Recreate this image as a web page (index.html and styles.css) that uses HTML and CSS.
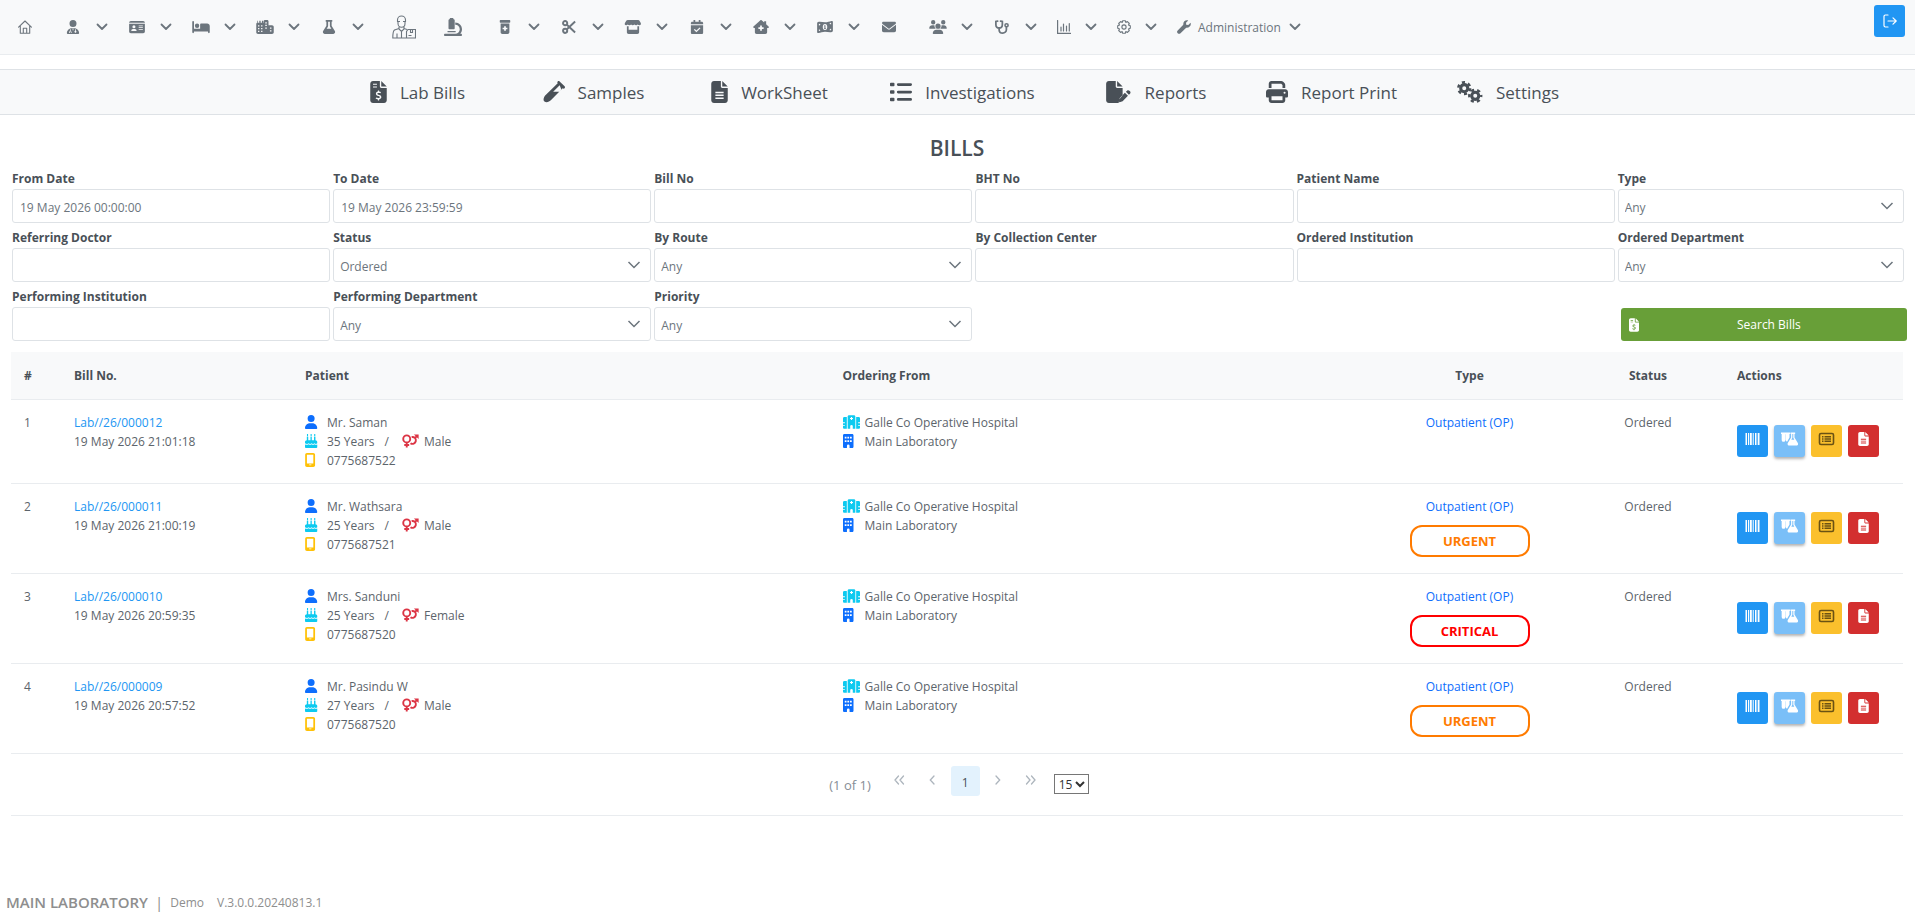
FILE: index.html
```html
<!DOCTYPE html>
<html lang="en">
<head>
    <meta charset="UTF-8">
    <meta name="viewport" content="width=device-width, initial-scale=1.0">
    <title>Bills</title>
    <link rel="stylesheet" href="styles.css">
</head>
<body>
    <!-- Icon sprite -->
    <svg class="sprite" aria-hidden="true">
        <symbol id="i-down" viewBox="0 0 14 14"><path d="M2.500 4.500 7 9l4.500-4.500" fill="none" stroke="currentColor" stroke-width="1.800" stroke-linecap="round" stroke-linejoin="round"/></symbol>
        <symbol id="i-home" viewBox="0 0 14 14"><path d="M.6 7.200 7 1l6.400 6.200M2.300 6v7.300h9.400V6M5.300 13V8.200h3.400V13" fill="none" stroke="currentColor" stroke-width="1.100" stroke-linecap="round" stroke-linejoin="round"/></symbol>
        <symbol id="i-doctor" viewBox="0 0 448 512"><path fill-rule="evenodd" d="M224 256A128 128 0 1 0 224 0a128 128 0 1 0 0 256zM178 304C80 304 0 384 0 482c0 16 13 30 30 30h388c17 0 30-14 30-30 0-98-80-178-178-178zM112 340h28v60c18 6 32 22 32 42v30h-28v-30c0-24-36-24-36 0v30H80v-30c0-20 14-36 32-42zM300 340h28v56a36 36 0 1 1-28 0zM205 320h38l-10 60h-18z"/></symbol>
        <symbol id="i-card" viewBox="0 0 576 512"><path fill-rule="evenodd" d="M0 96c0-35 29-64 64-64h448c35 0 64 29 64 64v8H0zM0 136h576v280c0 35-29 64-64 64H64c-35 0-64-29-64-64zM176 304a56 56 0 1 0 0-112 56 56 0 1 0 0 112zM140 328c-40 0-60 28-60 64 0 8 6 14 14 14h164c8 0 14-6 14-14 0-36-22-64-60-64zM350 200h152v30H350zM350 264h152v30H350zM350 328h152v30H350z"/></symbol>
        <symbol id="i-bed" viewBox="0 0 640 512"><path d="M32 32c17.700 0 32 14.300 32 32V320H288V160c0-17.700 14.300-32 32-32H544c53 0 96 43 96 96V448c0 17.700-14.300 32-32 32s-32-14.300-32-32V416H64v32c0 17.700-14.300 32-32 32s-32-14.300-32-32V64C0 46.300 14.300 32 32 32zm144 96a80 80 0 1 1 0 160 80 80 0 1 1 0-160z"/></symbol>
        <symbol id="i-city" viewBox="0 0 640 512"><path fill-rule="evenodd" d="M64 24v72h48V24h48v72h48V24h48v72h16V48c0-26 22-48 48-48h80c26 0 48 22 48 48v144h128c35 0 64 29 64 64v192c0 35-29 64-64 64H64c-35 0-64-29-64-64V144c0-26 16-48 40-48V24zM64 190h50v46H64zM64 290h50v46H64zM64 390h50v46H64zM176 190h50v46h-50zM176 290h50v46h-50zM176 390h50v46h-50zM330 80h56v46h-56zM330 176h56v46h-56zM330 276h56v46h-56zM500 276h56v46h-56zM500 376h56v46h-56z"/></symbol>
        <symbol id="i-flask" viewBox="0 0 448 512"><path d="M288 0H128C110.300 0 96 14.300 96 32s14.300 32 32 32V196.800c0 11.800-3.300 23.500-9.500 33.500L10.300 406.200C3.600 417.200 0 429.700 0 442.600C0 480.900 31.100 512 69.400 512H378.600c38.300 0 69.400-31.100 69.400-69.400c0-12.800-3.600-25.400-10.300-36.400L329.500 230.400c-6.200-10.100-9.500-21.700-9.500-33.500V64c17.700 0 32-14.300 32-32s-14.300-32-32-32H288zM192 196.800V64h64V196.800c0 23.700 6.600 46.900 19 67.100L309.500 320h-171L173 263.900c12.400-20.200 19-43.400 19-67.100z"/></symbol>
        <symbol id="i-staff" viewBox="0 0 24 24"><g fill="none" stroke="currentColor" stroke-width="1.100"><path d="M5.500 7V5a4 4 0 0 1 8 0v2M6 6.500v2c0 5 7 5 7 0v-2M5 6.500h3M11 6.500h3M7 12v2l2.500 2.500L12 14v-2M7 13.500l-4.500 1.500C1 16 .8 18 .8 23H14M12 13.500l3 1M5 18.500V23M9.500 17v6M16 14.500h7.500V23H14.500v-6.500zM18.500 14.500v3h2v-3M16.500 20.500h3"/></g></symbol>
        <symbol id="i-scope" viewBox="0 0 512 512"><path d="M160 32c0-18 14-32 32-32h48c18 0 32 14 32 32 18 0 32 14 32 32v224c0 18-14 32-32 32H160c-18 0-32-14-32-32V64c0-18 14-32 32-32zM32 448h288c71 0 128-57 128-128S391 192 320 192v-64c106 0 192 86 192 192 0 49-18 94-49 128h17c18 0 32 14 32 32s-14 32-32 32H32c-18 0-32-14-32-32s14-32 32-32zM112 368h208c9 0 16 7 16 16s-7 24-16 24H112c-9 0-16-15-16-24s7-16 16-16z"/></symbol>
        <symbol id="i-jar" viewBox="0 0 384 512"><path fill-rule="evenodd" d="M0 24C0 11 11 0 24 0h336c13 0 24 11 24 24v48c0 13-11 24-24 24H24C11 96 0 85 0 72zM32 128h320v320c0 35-29 64-64 64H96c-35 0-64-29-64-64zM160 224v56h-56v60h56v56h64v-56h56v-60h-56v-56z"/></symbol>
        <symbol id="i-cut" viewBox="0 0 16 16"><g fill="none" stroke="currentColor" stroke-width="2.200"><circle cx="3.600" cy="3.600" r="2.400"/><circle cx="3.600" cy="12.400" r="2.400"/><path d="M5.300 5.200 15 14.200M5.300 10.800 15 1.800"/></g></symbol>
        <symbol id="i-shop" viewBox="0 0 576 512"><path fill-rule="evenodd" d="M92 0h392c14 0 26 7 34 18l50 82c28 46 2 92-46 92-26 0-48-12-62-30-14 18-36 30-60 30s-48-12-62-30c-14 18-36 30-60 30s-46-12-60-30c-14 18-36 30-62 30s-46-12-60-30c-14 18-34 30-60 30-48 0-66-46-38-92l50-82C66 7 78 0 92 0zM64 224h64v128h320V224h64v224c0 35-29 64-64 64H128c-35 0-64-29-64-64z"/></symbol>
        <symbol id="i-cal" viewBox="0 0 448 512"><path fill-rule="evenodd" d="M96 0h64v64h128V0h64v64h48c26 0 48 22 48 48v40H0v-40c0-26 22-48 48-48h48zM0 192h448v272c0 26-22 48-48 48H48c-26 0-48-22-48-48zM318 270 202 384l-60-58-34 34 94 92 150-148z"/></symbol>
        <symbol id="i-house" viewBox="0 0 576 512"><path fill-rule="evenodd" d="M267 8c12-11 30-11 42 0l95 84V48h72v108l88 78c23 22 14 54-18 54h-34v160c0 35-29 64-64 64H128c-35 0-64-29-64-64V288H32c-32 0-42-32-20-54zM256 200v64h-64v64h64v64h64v-64h64v-64h-64v-64z"/></symbol>
        <symbol id="i-money" viewBox="0 0 576 512"><path fill-rule="evenodd" d="M0 120c0-22 10-38 32-44 90-26 170 10 256 10S450 50 530 36c26-4 46 12 46 36v320c0 22-12 38-34 44-90 24-168-8-254-8s-162 34-242 48C20 480 0 464 0 440zM288 144a82 112 0 1 0 0 224 82 112 0 1 0 0-224zM265 196h40v104h16v30h-66v-30h12v-70h-14zM64 140v60c32 0 56-26 56-58zM64 404v-60c32 0 50 18 50 50zM512 100v60c-30 0-56-20-56-52zM512 376v-56c-30 0-56 26-56 56z"/></symbol>
        <symbol id="i-mail" viewBox="0 0 512 512"><path d="M48 64C21.500 64 0 85.500 0 112c0 15.100 7.100 29.300 19.200 38.400L236.800 313.600c11.400 8.500 27 8.500 38.400 0L492.800 150.400c12.100-9.100 19.200-23.300 19.200-38.400c0-26.500-21.500-48-48-48H48zM0 176V384c0 35.300 28.700 64 64 64H448c35.300 0 64-28.700 64-64V176L294.400 339.200c-22.800 17.100-54 17.100-76.800 0L0 176z"/></symbol>
        <symbol id="i-users" viewBox="0 0 640 512"><path d="M144 0a80 80 0 1 1 0 160A80 80 0 1 1 144 0zM512 0a80 80 0 1 1 0 160A80 80 0 1 1 512 0zM0 298c0-58 48-106 107-106h42c16 0 31 4 45 10-8 50 12 90 42 118H21c-12 0-21-10-21-22zM404 320c30-28 50-68 42-118 14-6 29-10 45-10h42c59 0 107 48 107 106 0 12-9 22-21 22zM320 128a96 96 0 1 1 0 192 96 96 0 1 1 0-192zM128 485c0-74 60-133 133-133h118c73 0 133 59 133 133 0 15-12 27-27 27H155c-15 0-27-12-27-27z"/></symbol>
        <symbol id="i-steth" viewBox="0 0 18 16"><path d="M4 1.200 2 1.700V5c0 5.500 7.400 5.500 7.400 0V1.700L7.400 1.200M5.700 9v2c0 5.200 8.300 5.200 8.300 0V8" fill="none" stroke="currentColor" stroke-width="2" stroke-linecap="round"/><circle cx="14.200" cy="6" r="1.800" fill="none" stroke="currentColor" stroke-width="1.800"/></symbol>
        <symbol id="i-chart" viewBox="0 0 14 14"><path d="M.6.500v12.900h13M4 11V7M6.500 11V4M9.500 11V6M12.300 11V3.500" fill="none" stroke="currentColor" stroke-width="1.200" stroke-linecap="round"/></symbol>
        <symbol id="i-cog" viewBox="0 0 14 14"><path d="M5.700.7h2.600l.5 1.700 1.600-.8 1.900 1.900-.8 1.600 1.800.6v2.600l-1.800.6.8 1.600-1.900 1.900-1.600-.8-.5 1.700H5.700l-.5-1.700-1.600.8-1.900-1.900.8-1.600-1.800-.6V5.700l1.800-.6-.8-1.600 1.900-1.900 1.600.8z" fill="none" stroke="currentColor" stroke-width="1.100" stroke-linejoin="round"/><circle cx="7" cy="7" r="2.100" fill="none" stroke="currentColor" stroke-width="1.100"/></symbol>
        <symbol id="i-wrench" viewBox="0 0 14 14"><path d="M13.600 2.800 11.300 5 9.200 4.800 9 2.700 11.200.4C8.500-.5 5.900 1.600 6.300 4.800L.7 10.400c-.9.900-.9 2 0 2.800s2 .8 2.800 0l5.700-5.500c3.200.3 5.300-2.200 4.400-4.900z"/></symbol>
        <symbol id="i-out" viewBox="0 0 14 14"><path d="M5 1H2.400C1.600 1 1 1.600 1 2.400v9.200c0 .8.600 1.400 1.400 1.400H5M5 7h8M10 3.800 13.200 7 10 10.200" fill="none" stroke="currentColor" stroke-width="1.200" stroke-linecap="round" stroke-linejoin="round"/></symbol>
        <symbol id="i-invoice" viewBox="0 0 384 512"><path fill-rule="evenodd" d="M64 0C28.700 0 0 28.700 0 64V448c0 35.300 28.700 64 64 64H320c35.300 0 64-28.700 64-64V160H256c-17.700 0-32-14.300-32-32V0zM256 0V128H384zM64 64h92v26H64zM64 128h92v26H64zM178 220h28v26c18 2 32 6 42 10l-8 30c-22-8-74-16-74 8 0 30 92 14 92 78 0 32-22 50-52 56v28h-28v-28c-20-2-40-8-52-14l10-30c24 12 86 24 88-10 0-32-92-18-92-78 0-30 20-44 46-50z"/></symbol>
        <symbol id="i-vial" viewBox="0 0 512 512"><path fill-rule="evenodd" d="M342 9c12-12 33-12 45 0l116 116c12 12 12 33 0 45s-33 12-45 0L194 434c-50 50-110 78-160 44-46-42-10-120 40-166L342 54c-12-12-12-33 0-45zM388 100 236 250h142l36-36c14-18 14-32 4-42z"/></symbol>
        <symbol id="i-file" viewBox="0 0 384 512"><path fill-rule="evenodd" d="M64 0C28.700 0 0 28.700 0 64V448c0 35.300 28.700 64 64 64H320c35.300 0 64-28.700 64-64V160H256c-17.700 0-32-14.300-32-32V0zM256 0V128H384zM96 250h192v34H96zM96 316h192v34H96zM96 382h192v34H96z"/></symbol>
        <symbol id="i-list" viewBox="0 0 512 512"><path d="M20 40h64c11 0 20 9 20 20v44c0 11-9 20-20 20H20c-11 0-20-9-20-20V60c0-11 9-20 20-20zM20 214h64c11 0 20 9 20 20v44c0 11-9 20-20 20H20c-11 0-20-9-20-20v-44c0-11 9-20 20-20zM20 388h64c11 0 20 9 20 20v44c0 11-9 20-20 20H20c-11 0-20-9-20-20v-44c0-11 9-20 20-20zM192 50h288a32 32 0 0 1 0 64H192a32 32 0 0 1 0-64zM192 224h288a32 32 0 0 1 0 64H192a32 32 0 0 1 0-64zM192 398h288a32 32 0 0 1 0 64H192a32 32 0 0 1 0-64z"/></symbol>
        <symbol id="i-pen" viewBox="0 0 576 512"><path d="M64 0C28.700 0 0 28.700 0 64V448c0 35.300 28.700 64 64 64h226l22-96 72-76V160H256c-17.700 0-32-14.300-32-32V0zM256 0V128H384zM550 234c18 16 26 40 6 60l-26 28-70-70 28-28c18-18 42-10 62 10zM436 274l72 72-124 126-70 20c-8 2-16-6-14-14l14-76z"/></symbol>
        <symbol id="i-print" viewBox="0 0 512 512"><path d="M128 0C92.700 0 64 28.700 64 64v96h64V64H354.700L384 93.300V160h64V93.300c0-17-6.700-33.300-18.700-45.300L400 18.700C388 6.700 371.700 0 354.700 0H128zM384 352v96H128V352H384zm64 32h32c17.700 0 32-14.300 32-32V256c0-35.300-28.700-64-64-64H64c-35.300 0-64 28.700-64 64v96c0 17.700 14.300 32 32 32H64v64c0 35.300 28.700 64 64 64H384c35.300 0 64-28.700 64-64V384zM432 248a24 24 0 1 1 0 48 24 24 0 1 1 0-48z"/></symbol>
        <symbol id="i-gears" viewBox="0 0 28 23"><g fill="none" stroke="currentColor"><circle cx="8.500" cy="7.500" r="3.700" stroke-width="3.200"/><circle cx="8.500" cy="7.500" r="6.200" stroke-width="2.600" stroke-dasharray="3.250 3.250"/><circle cx="20" cy="15.500" r="3.700" stroke-width="3.200"/><circle cx="20" cy="15.500" r="6.200" stroke-width="2.600" stroke-dasharray="3.250 3.250" stroke-dashoffset="2"/></g></symbol>
        <symbol id="i-user" viewBox="0 0 448 512" preserveAspectRatio="xMinYMid"><path d="M224 256A128 128 0 1 0 224 0a128 128 0 1 0 0 256zm-45.700 48C79.800 304 0 383.800 0 482.300C0 498.700 13.300 512 29.700 512H418.300c16.400 0 29.700-13.300 29.700-29.700C448 383.800 368.200 304 269.700 304H178.300z"/></symbol>
        <symbol id="i-cake" viewBox="0 0 448 512" preserveAspectRatio="xMinYMid"><path d="M72 0h40v80H72zM204 0h40v80h-40zM336 0h40v80h-40zM66 104h52v120h82V104h48v120h82V104h52v120c36 0 66 28 66 64v48c-40 40-70 28-100 0-34 34-72 34-108 0-34 34-72 34-108 0-36 34-70 40-132 0v-48c0-36 30-64 66-64zM0 380c50 22 90 22 132-6 36 26 72 26 108 0 36 26 72 26 108 0 34 22 66 24 100 8v98c0 18-14 32-32 32H32c-18 0-32-14-32-32z"/></symbol>
        <symbol id="i-phone" viewBox="0 0 384 512" preserveAspectRatio="xMinYMid"><path fill-rule="evenodd" d="M6 64C6 28.700 34.700 0 70 0H304c35.300 0 64 28.700 64 64V448c0 35.300-28.700 64-64 64H70c-35.300 0-64-28.700-64-64zM144 432c0 9 7 16 16 16h64c9 0 16-7 16-16s-7-16-16-16h-64c-9 0-16 7-16 16zM304 64H70V384H304z"/></symbol>
        <symbol id="i-gender" viewBox="0 0 18 14"><g fill="none" stroke="currentColor" stroke-width="2"><circle cx="5" cy="4.800" r="3.700"/><path d="M5 8.500V14M2.400 11.200h5.200M9 9.300a3.600 3.600 0 1 0 1.200-6.400M13.200 4.300 16 1.600"/></g><path d="M12.600 0H17.600V5z"/></symbol>
        <symbol id="i-hospital" viewBox="0 0 640 512"><path fill-rule="evenodd" d="M224 0h192c26 0 48 22 48 48v464h-96v-96a48 48 0 0 0-96 0v96h-96V48c0-26 22-48 48-48zM298 70v32h-34v42h34v34h44v-34h34v-42h-34V70zM48 64h96v448H48c-26 0-48-22-48-48v-64h70v-34H0v-64h70v-34H0V112c0-26 22-48 48-48zM496 64h96c26 0 48 22 48 48v156h-70v34h70v64h-70v34h70v64c0 26-22 48-48 48h-96z"/></symbol>
        <symbol id="i-building" viewBox="0 0 384 512" preserveAspectRatio="xMinYMid"><path fill-rule="evenodd" d="M48 0h288c26 0 48 22 48 48v416c0 26-22 48-48 48h-96v-80a48 48 0 0 0-96 0v80H48c-26 0-48-22-48-48V48C0 22 22 0 48 0zM64 96v64h64V96zM160 96v64h64V96zM256 96v64h64V96zM64 224v64h64v-64zM160 224v64h64v-64zM256 224v64h64v-64z"/></symbol>
        <symbol id="i-barcode" viewBox="0 0 14 14"><path d="M0 1h1.500v12H0zM2.500 1h1v12h-1zM4.300 1h2v12h-2zM7.200 1h1v12h-1zM9.500 1h1.500v12H9.500zM12.200 1H14v12h-1.800z"/></symbol>
        <symbol id="i-tubes" viewBox="0 0 18 14"><path fill-rule="evenodd" d="M0 0h9.500v1.800H9v3.600L6.400 10A2.400 2.400 0 0 1 5 7.500V2H4.700v6a2 2 0 0 1-4 0V1.800H0zM10 0h5v1.800h-.7v3.500l3.500 6c.7 1.300 0 2.700-1.400 2.700H8.600c-1.400 0-2.100-1.400-1.400-2.700l3.500-6V1.800H10zM12 1.800v4L10.900 7.800h3.200L13 5.800v-4z"/></symbol>
        <symbol id="i-lines" viewBox="0 0 16 14"><rect x="1" y="1.500" width="14" height="11" rx="1.500" fill="none" stroke="currentColor" stroke-width="1.600"/><path d="M3.500 4h1.500v1.500H3.500zM6 4h6.500v1.500H6zM3.500 6.300h1.500v1.500H3.500zM6 6.300h6.500v1.500H6zM3.500 8.600h1.500v1.500H3.500zM6 8.600h6.500v1.500H6z"/></symbol>
        <symbol id="i-first" viewBox="0 0 14 14"><path d="M6.500 3 3 7l3.500 4M11.500 3 8 7l3.500 4" fill="none" stroke="currentColor" stroke-width="1.300" stroke-linecap="round"/></symbol>
        <symbol id="i-prev" viewBox="0 0 14 14"><path d="M9 3 5.300 7 9 11" fill="none" stroke="currentColor" stroke-width="1.300" stroke-linecap="round"/></symbol>
        <symbol id="i-next" viewBox="0 0 14 14"><path d="M5 3l3.700 4L5 11" fill="none" stroke="currentColor" stroke-width="1.300" stroke-linecap="round"/></symbol>
        <symbol id="i-last" viewBox="0 0 14 14"><path d="M2.500 3 6 7l-3.500 4M7.500 3 11 7l-3.500 4" fill="none" stroke="currentColor" stroke-width="1.300" stroke-linecap="round"/></symbol>
    </svg>

    <!-- Main menu -->
    <header class="topbar">
        <nav class="menu">
            <a class="menu-item" href="#" aria-label="Home"><svg class="pi"><use href="#i-home"/></svg></a>
            <button class="menu-item" type="button" aria-label="Patients"><svg class="fa"><use href="#i-doctor"/></svg><svg class="pi"><use href="#i-down"/></svg></button>
            <button class="menu-item" type="button" aria-label="Membership"><svg class="fa"><use href="#i-card"/></svg><svg class="pi"><use href="#i-down"/></svg></button>
            <button class="menu-item" type="button" aria-label="Inward"><svg class="fa"><use href="#i-bed"/></svg><svg class="pi"><use href="#i-down"/></svg></button>
            <button class="menu-item" type="button" aria-label="Institutions"><svg class="fa"><use href="#i-city"/></svg><svg class="pi"><use href="#i-down"/></svg></button>
            <button class="menu-item" type="button" aria-label="Lab"><svg class="fa"><use href="#i-flask"/></svg><svg class="pi"><use href="#i-down"/></svg></button>
            <a class="menu-item menu-staff" href="#" aria-label="Courier"><svg><use href="#i-staff"/></svg></a>
            <a class="menu-item menu-scope" href="#" aria-label="Laboratory"><svg><use href="#i-scope"/></svg></a>
            <button class="menu-item" type="button" aria-label="Pharmacy"><svg class="fa"><use href="#i-jar"/></svg><svg class="pi"><use href="#i-down"/></svg></button>
            <button class="menu-item" type="button" aria-label="Theatre"><svg class="fa"><use href="#i-cut"/></svg><svg class="pi"><use href="#i-down"/></svg></button>
            <button class="menu-item" type="button" aria-label="Store"><svg class="fa"><use href="#i-shop"/></svg><svg class="pi"><use href="#i-down"/></svg></button>
            <button class="menu-item" type="button" aria-label="Bookings"><svg class="fa"><use href="#i-cal"/></svg><svg class="pi"><use href="#i-down"/></svg></button>
            <button class="menu-item" type="button" aria-label="Clinic"><svg class="fa"><use href="#i-house"/></svg><svg class="pi"><use href="#i-down"/></svg></button>
            <button class="menu-item" type="button" aria-label="Cashier"><svg class="fa"><use href="#i-money"/></svg><svg class="pi"><use href="#i-down"/></svg></button>
            <a class="menu-item menu-mail" href="#" aria-label="Messages"><svg class="fa"><use href="#i-mail"/></svg></a>
            <button class="menu-item" type="button" aria-label="HR"><svg class="fa"><use href="#i-users"/></svg><svg class="pi"><use href="#i-down"/></svg></button>
            <button class="menu-item" type="button" aria-label="EMR"><svg class="fa"><use href="#i-steth"/></svg><svg class="pi"><use href="#i-down"/></svg></button>
            <button class="menu-item" type="button" aria-label="Analytics"><svg class="pi"><use href="#i-chart"/></svg><svg class="pi"><use href="#i-down"/></svg></button>
            <button class="menu-item" type="button" aria-label="Settings"><svg class="pi"><use href="#i-cog"/></svg><svg class="pi"><use href="#i-down"/></svg></button>
            <button class="menu-item menu-text" type="button"><svg class="pi"><use href="#i-wrench"/></svg><span>Administration</span><svg class="pi"><use href="#i-down"/></svg></button>
        </nav>
        <button class="logout-btn" type="button" aria-label="Logout"><svg class="pi"><use href="#i-out"/></svg></button>
    </header>

    <!-- Laboratory menu -->
    <nav class="subnav">
        <a class="tab" href="#"><svg class="slim"><use href="#i-invoice"/></svg>Lab Bills</a>
        <a class="tab" href="#"><svg><use href="#i-vial"/></svg>Samples</a>
        <a class="tab" href="#"><svg class="slim"><use href="#i-file"/></svg>WorkSheet</a>
        <a class="tab tab-wide" href="#"><svg><use href="#i-list"/></svg>Investigations</a>
        <a class="tab" href="#"><svg class="broad"><use href="#i-pen"/></svg>Reports</a>
        <a class="tab" href="#"><svg><use href="#i-print"/></svg>Report Print</a>
        <a class="tab" href="#"><svg class="broad"><use href="#i-gears"/></svg>Settings</a>
    </nav>

    <main class="content">
        <h1>BILLS</h1>

        <!-- Search filters -->
        <form class="filters">
            <div class="field"><label for="fromDate">From Date</label><input type="text" id="fromDate" value="19 May 2026 00:00:00"></div>
            <div class="field"><label for="toDate">To Date</label><input type="text" id="toDate" value="19 May 2026 23:59:59"></div>
            <div class="field"><label for="billNo">Bill No</label><input type="text" id="billNo"></div>
            <div class="field"><label for="bhtNo">BHT No</label><input type="text" id="bhtNo"></div>
            <div class="field"><label for="patientName">Patient Name</label><input type="text" id="patientName"></div>
            <div class="field"><label for="type">Type</label><select id="type"><option>Any</option></select></div>

            <div class="field"><label for="doctor">Referring Doctor</label><input type="text" id="doctor"></div>
            <div class="field"><label for="status">Status</label><select id="status"><option>Ordered</option></select></div>
            <div class="field"><label for="route">By Route</label><select id="route"><option>Any</option></select></div>
            <div class="field"><label for="center">By Collection Center</label><input type="text" id="center"></div>
            <div class="field"><label for="ordInstitution">Ordered Institution</label><input type="text" id="ordInstitution"></div>
            <div class="field"><label for="ordDepartment">Ordered Department</label><select id="ordDepartment"><option>Any</option></select></div>

            <div class="field"><label for="perInstitution">Performing Institution</label><input type="text" id="perInstitution"></div>
            <div class="field"><label for="perDepartment">Performing Department</label><select id="perDepartment"><option>Any</option></select></div>
            <div class="field"><label for="priority">Priority</label><select id="priority"><option>Any</option></select></div>
            <button class="search-btn" type="button"><svg><use href="#i-invoice"/></svg><span>Search Bills</span></button>
        </form>

        <!-- Bills table -->
        <table class="bills">
            <thead>
                <tr>
                    <th class="col-no">#</th>
                    <th class="col-bill">Bill No.</th>
                    <th>Patient</th>
                    <th>Ordering From</th>
                    <th class="col-type">Type</th>
                    <th class="col-status">Status</th>
                    <th class="col-actions">Actions</th>
                </tr>
            </thead>
            <tbody>
                <tr>
                    <td>1</td>
                    <td><a href="#">Lab//26/000012</a><div>19 May 2026 21:01:18</div></td>
                    <td>
                        <div class="line"><svg class="blue"><use href="#i-user"/></svg>Mr. Saman</div>
                        <div class="line"><svg class="cyan"><use href="#i-cake"/></svg>35 Years<span class="slash">/</span><svg class="red"><use href="#i-gender"/></svg>Male</div>
                        <div class="line"><svg class="yellow"><use href="#i-phone"/></svg>0775687522</div>
                    </td>
                    <td>
                        <div class="line"><svg class="cyan"><use href="#i-hospital"/></svg>Galle Co Operative Hospital</div>
                        <div class="line"><svg class="blue"><use href="#i-building"/></svg>Main Laboratory</div>
                    </td>
                    <td class="center"><div class="visit">Outpatient (OP)</div></td>
                    <td class="center">Ordered</td>
                    <td class="actions">
                        <div class="btns">
                            <button class="btn btn-barcode" type="button" aria-label="Barcode"><svg><use href="#i-barcode"/></svg></button>
                            <button class="btn btn-sample" type="button" aria-label="Samples" disabled><svg><use href="#i-tubes"/></svg></button>
                            <button class="btn btn-list" type="button" aria-label="Investigations"><svg><use href="#i-lines"/></svg></button>
                            <button class="btn btn-bill" type="button" aria-label="Bill"><svg><use href="#i-file"/></svg></button>
                        </div>
                    </td>
                </tr>
                <tr>
                    <td>2</td>
                    <td><a href="#">Lab//26/000011</a><div>19 May 2026 21:00:19</div></td>
                    <td>
                        <div class="line"><svg class="blue"><use href="#i-user"/></svg>Mr. Wathsara</div>
                        <div class="line"><svg class="cyan"><use href="#i-cake"/></svg>25 Years<span class="slash">/</span><svg class="red"><use href="#i-gender"/></svg>Male</div>
                        <div class="line"><svg class="yellow"><use href="#i-phone"/></svg>0775687521</div>
                    </td>
                    <td>
                        <div class="line"><svg class="cyan"><use href="#i-hospital"/></svg>Galle Co Operative Hospital</div>
                        <div class="line"><svg class="blue"><use href="#i-building"/></svg>Main Laboratory</div>
                    </td>
                    <td class="center"><div class="visit">Outpatient (OP)</div><div class="badge urgent">URGENT</div></td>
                    <td class="center">Ordered</td>
                    <td class="actions">
                        <div class="btns">
                            <button class="btn btn-barcode" type="button" aria-label="Barcode"><svg><use href="#i-barcode"/></svg></button>
                            <button class="btn btn-sample" type="button" aria-label="Samples" disabled><svg><use href="#i-tubes"/></svg></button>
                            <button class="btn btn-list" type="button" aria-label="Investigations"><svg><use href="#i-lines"/></svg></button>
                            <button class="btn btn-bill" type="button" aria-label="Bill"><svg><use href="#i-file"/></svg></button>
                        </div>
                    </td>
                </tr>
                <tr>
                    <td>3</td>
                    <td><a href="#">Lab//26/000010</a><div>19 May 2026 20:59:35</div></td>
                    <td>
                        <div class="line"><svg class="blue"><use href="#i-user"/></svg>Mrs. Sanduni</div>
                        <div class="line"><svg class="cyan"><use href="#i-cake"/></svg>25 Years<span class="slash">/</span><svg class="red"><use href="#i-gender"/></svg>Female</div>
                        <div class="line"><svg class="yellow"><use href="#i-phone"/></svg>0775687520</div>
                    </td>
                    <td>
                        <div class="line"><svg class="cyan"><use href="#i-hospital"/></svg>Galle Co Operative Hospital</div>
                        <div class="line"><svg class="blue"><use href="#i-building"/></svg>Main Laboratory</div>
                    </td>
                    <td class="center"><div class="visit">Outpatient (OP)</div><div class="badge critical">CRITICAL</div></td>
                    <td class="center">Ordered</td>
                    <td class="actions">
                        <div class="btns">
                            <button class="btn btn-barcode" type="button" aria-label="Barcode"><svg><use href="#i-barcode"/></svg></button>
                            <button class="btn btn-sample" type="button" aria-label="Samples" disabled><svg><use href="#i-tubes"/></svg></button>
                            <button class="btn btn-list" type="button" aria-label="Investigations"><svg><use href="#i-lines"/></svg></button>
                            <button class="btn btn-bill" type="button" aria-label="Bill"><svg><use href="#i-file"/></svg></button>
                        </div>
                    </td>
                </tr>
                <tr>
                    <td>4</td>
                    <td><a href="#">Lab//26/000009</a><div>19 May 2026 20:57:52</div></td>
                    <td>
                        <div class="line"><svg class="blue"><use href="#i-user"/></svg>Mr. Pasindu W</div>
                        <div class="line"><svg class="cyan"><use href="#i-cake"/></svg>27 Years<span class="slash">/</span><svg class="red"><use href="#i-gender"/></svg>Male</div>
                        <div class="line"><svg class="yellow"><use href="#i-phone"/></svg>0775687520</div>
                    </td>
                    <td>
                        <div class="line"><svg class="cyan"><use href="#i-hospital"/></svg>Galle Co Operative Hospital</div>
                        <div class="line"><svg class="blue"><use href="#i-building"/></svg>Main Laboratory</div>
                    </td>
                    <td class="center"><div class="visit">Outpatient (OP)</div><div class="badge urgent">URGENT</div></td>
                    <td class="center">Ordered</td>
                    <td class="actions">
                        <div class="btns">
                            <button class="btn btn-barcode" type="button" aria-label="Barcode"><svg><use href="#i-barcode"/></svg></button>
                            <button class="btn btn-sample" type="button" aria-label="Samples" disabled><svg><use href="#i-tubes"/></svg></button>
                            <button class="btn btn-list" type="button" aria-label="Investigations"><svg><use href="#i-lines"/></svg></button>
                            <button class="btn btn-bill" type="button" aria-label="Bill"><svg><use href="#i-file"/></svg></button>
                        </div>
                    </td>
                </tr>
            </tbody>
        </table>

        <!-- Paginator -->
        <div class="paginator">
            <span class="page-info">(1 of 1)</span>
            <button class="page-btn" type="button" aria-label="First page" disabled><svg class="pi"><use href="#i-first"/></svg></button>
            <button class="page-btn" type="button" aria-label="Previous page" disabled><svg class="pi"><use href="#i-prev"/></svg></button>
            <button class="page-btn active" type="button">1</button>
            <button class="page-btn" type="button" aria-label="Next page" disabled><svg class="pi"><use href="#i-next"/></svg></button>
            <button class="page-btn" type="button" aria-label="Last page" disabled><svg class="pi"><use href="#i-last"/></svg></button>
            <select class="page-size" aria-label="Rows per page"><option>15</option></select>
        </div>
    </main>

    <footer class="footer">
        <b>MAIN LABORATORY</b><span class="bar">|</span><span>Demo</span><span class="version">V.3.0.0.20240813.1</span>
    </footer>
</body>
</html>
```

FILE: styles.css
```css
* {
    box-sizing: border-box;
}
body {
    font-family: "Open Sans", "Noto Sans", sans-serif;
    font-size: 12px;
    line-height: 19px;
    color: #495057;
    background: #fff;
    margin: 0;
    min-height: 100vh;
    display: flex;
    flex-direction: column;
}
button, input, select {
    font-family: inherit;
    font-size: inherit;
    line-height: inherit;
    color: inherit;
}
button {
    border: none;
    background: none;
    padding: 0;
    cursor: pointer;
}
a {
    color: #2196f3;
    text-decoration: none;
}
svg {
    fill: currentColor;
    flex: none;
}
.sprite {
    display: none;
}
.pi {
    width: 14px;
    height: 14px;
}
.fa {
    width: 18px;
    height: 14px;
}

/* Main menu */
.topbar {
    display: flex;
    justify-content: space-between;
    align-items: flex-start;
    height: 55px;
    padding: 0 10px 0 18px;
    background: #f8f9fa;
    border-bottom: 1px solid #e9ecef;
}
.menu {
    display: flex;
    height: 54px;
}
.menu-item {
    display: flex;
    align-items: center;
    gap: 13px;
    padding-right: 19px;
    color: #6c757d;
}
a.menu-item {
    padding-right: 32px;
}
.menu-staff.menu-item {
    padding: 0 28px 0 8px;
}
.menu-staff svg {
    width: 24px;
    height: 24px;
}
.menu-scope.menu-item {
    padding-right: 34px;
}
.menu-scope svg {
    width: 18px;
    height: 18px;
}
.menu-mail.menu-item {
    padding-right: 31px;
}
.menu-text {
    gap: 7px;
}
.logout-btn {
    display: flex;
    align-items: center;
    justify-content: center;
    width: 31px;
    height: 32px;
    margin-top: 5px;
    background: #2196f3;
    color: #fff;
    border-radius: 3px;
}

/* Laboratory menu */
.subnav {
    display: flex;
    justify-content: center;
    height: 46px;
    margin-top: 14px;
    padding-left: 10px;
    background: #f8f9fa;
    border-top: 1px solid #dee2e6;
    border-bottom: 1px solid #dee2e6;
}
.tab {
    display: flex;
    align-items: center;
    justify-content: center;
    gap: 13px;
    width: 176px;
    font-size: 17px;
    font-weight: 500;
    color: #495057;
}
.tab-wide {
    width: 210px;
}
.tab svg {
    width: 22px;
    height: 22px;
}
.tab svg.slim {
    width: 17px;
}
.tab svg.broad {
    width: 27px;
}

/* Filters */
.content {
    padding: 0 12px 0 11px;
}
h1 {
    font-size: 21px;
    line-height: 32px;
    font-weight: 600;
    text-align: center;
    margin: 17px 0 4px;
}
.filters {
    display: grid;
    grid-template-columns: repeat(5, 10fr) 9fr;
    gap: 4px 3px;
    margin: 0 -1px 0 1px;
}
.field {
    display: flex;
    flex-direction: column;
    min-width: 0;
}
.field label {
    font-weight: 700;
    line-height: 21px;
}
.field input,
.field select {
    width: 100%;
    height: 34px;
    padding: 2px 7px 0;
    color: #6c757d;
    background: #fff;
    border: 1px solid #dee2e6;
    border-radius: 3px;
}
.field select {
    appearance: none;
    padding-left: 6px;
    background: #fff url("data:image/svg+xml,%3Csvg xmlns='http://www.w3.org/2000/svg' width='14' height='14'%3E%3Cpath d='M1.500 4 7 9.500 12.500 4' fill='none' stroke='%236c757d' stroke-width='1.500'/%3E%3C/svg%3E") no-repeat right 9px center;
}
.search-btn {
    grid-column: 6;
    align-self: end;
    display: flex;
    align-items: center;
    height: 33px;
    margin: 0 -3px 0 3px;
    padding: 0 8px;
    background: #689f38;
    color: #fff;
    border-radius: 3px;
}
.search-btn svg {
    width: 10px;
    height: 14px;
}
.search-btn span {
    flex: 1;
}

/* Bills table */
.bills {
    width: 100%;
    margin-top: 11px;
    table-layout: fixed;
    border-collapse: collapse;
}
.bills th {
    height: 47px;
    padding: 0 13px;
    text-align: left;
    background: #f8f9fa;
    border-bottom: 1px solid #e9ecef;
}
.bills td {
    padding: 13px;
    vertical-align: top;
    color: #5c646b;
    border-bottom: 1px solid #e9ecef;
}
.bills .col-no {
    width: 50px;
}
.bills .col-bill {
    width: 231px;
}
.bills .col-type {
    width: 205px;
    text-align: center;
}
.bills .col-status {
    width: 152px;
    text-align: center;
}
.bills .col-actions {
    width: 179px;
}
.bills .center {
    text-align: center;
}
.bills .actions {
    vertical-align: middle;
}
.line {
    display: flex;
    align-items: center;
}
.line svg {
    width: 17px;
    height: 14px;
    margin-right: 5px;
}
.blue { color: #0d6efd; }
.cyan { color: #0dcaf0; }
.yellow { color: #ffc107; }
.red { color: #dc3545; }
.slash {
    margin: 0 13px 0 10px;
}
.visit {
    color: #0d6efd;
}
.badge {
    width: 120px;
    margin: 9px auto 3px;
    line-height: 28px;
    font-size: 13px;
    font-weight: 700;
    border: 2px solid;
    border-radius: 12px;
}
.urgent {
    color: #ff7b00;
}
.critical {
    color: #f00;
}
.btns {
    display: flex;
    gap: 6px;
}
.btn {
    display: flex;
    align-items: center;
    justify-content: center;
    width: 31px;
    height: 32px;
    padding-bottom: 4px;
    color: #fff;
    border-radius: 3px;
}
.btn svg {
    width: 17px;
    height: 14px;
}
.btn-barcode {
    background: #2196f3;
}
.btn-sample {
    background: #7abff8;
    box-shadow: 0 2px 3px rgba(0, 0, 0, 0.3);
}
.btn-list {
    background: #fbc02d;
    color: #6b5213;
}
.btn-bill {
    background: #d32f2f;
}

/* Paginator */
.paginator {
    display: flex;
    justify-content: center;
    align-items: center;
    gap: 4px;
    height: 62px;
    padding: 0 0 6px 4px;
    border-bottom: 1px solid #e9ecef;
}
.page-info {
    font-size: 13px;
    color: #868e96;
    margin: 8px 10px 0 0;
}
.page-btn {
    display: flex;
    align-items: center;
    justify-content: center;
    width: 29px;
    height: 30px;
    color: #6c757d;
    border-radius: 3px;
}
.page-btn:disabled {
    padding-bottom: 2px;
    color: #adb5bd;
}
.page-btn.active {
    padding-top: 2px;
    background: #e3f2fd;
    color: #495057;
}
.page-size {
    width: 35px;
    height: 20px;
    margin: 6px 0 0 4px;
    padding: 0;
    font-size: 12px;
    color: #333;
    background: #fff;
    border: 1px solid #767676;
    border-radius: 0;
}

/* Footer */
.footer {
    display: flex;
    align-items: center;
    height: 36px;
    margin-top: auto;
    padding-left: 6px;
    color: #8e8e8e;
}
.footer b {
    font-size: 15px;
    font-weight: 600;
}
.footer .bar {
    margin: 0 7px;
    font-size: 15px;
}
.footer .version {
    margin-left: 13px;
}
```
